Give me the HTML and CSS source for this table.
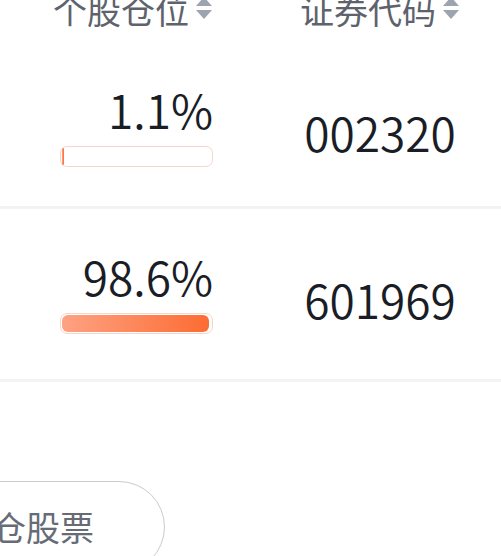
FILE: index.html
```html
<!DOCTYPE html>
<html lang="zh-CN">
<head>
<meta charset="utf-8">
<link rel="stylesheet" href="styles.css">
</head>
<body>
<div class="page">
  <div class="table">
    <div class="row head">
      <div class="cell c1"><span class="th">个股仓位<svg class="sort" viewBox="0 0 18 26" width="18" height="26"><polygon points="9,0 17,9 1,9"/><polygon points="1,13 17,13 9,22"/></svg></span></div>
      <div class="cell c2"><span class="th">证券代码<svg class="sort" viewBox="0 0 18 26" width="18" height="26"><polygon points="9,0 17,9 1,9"/><polygon points="1,13 17,13 9,22"/></svg></span></div>
    </div>
    <div class="row body">
      <div class="cell c1">
        <div class="pct">1.1%</div>
        <div class="track"><div class="fill" style="width:1.1%"></div></div>
      </div>
      <div class="cell c2"><div class="code">002320</div></div>
    </div>
    <div class="row body">
      <div class="cell c1">
        <div class="pct">98.6%</div>
        <div class="track"><div class="fill" style="width:98.6%"></div></div>
      </div>
      <div class="cell c2"><div class="code">601969</div></div>
    </div>
  </div>
  <div class="actions">
    <button class="btn">持仓股票</button>
  </div>
</div>
</body>
</html>
```

FILE: styles.css
```css
html, body {
  margin: 0;
  padding: 0;
  background: #ffffff;
}
body {
  width: 501px;
  height: 556px;
  overflow: hidden;
  font-family: "Noto Sans CJK SC", "Noto Sans", sans-serif;
}
.page {
  width: 501px;
}
.row {
  display: grid;
  grid-template-columns: 213px 180px;
  column-gap: 77px;
}
.head {
  margin-top: -7px;
  padding-bottom: 17px;
}
.th {
  display: inline-flex;
  align-items: center;
  font-size: 34px;
  line-height: 34px;
  color: #5e626d;
  white-space: nowrap;
}
.sort {
  margin-left: 6px;
  fill: #9ea3b0;
  flex: none;
}
.c1 {
  display: flex;
  flex-direction: column;
  align-items: flex-end;
}
.c2 {
  display: flex;
  justify-content: center;
  align-items: center;
}
.body {
  padding: 43px 0 39px;
  border-bottom: 3px solid #f3f3f3;
  align-items: center;
}
.body:last-child {
  padding: 45px 0 45px;
}
.pct {
  font-size: 46px;
  line-height: 45px;
  font-weight: 350;
  color: #1a1d26;
  white-space: nowrap;
}
.track {
  margin-top: 14px;
  width: 153px;
  height: 21px;
  box-sizing: border-box;
  border: 1.5px solid #f6d5ca;
  border-radius: 7px;
  padding: 1px;
  background: #ffffff;
}
.fill {
  height: 100%;
  border-radius: 6px;
  background: linear-gradient(90deg, #fea282 0%, #fc6c33 100%);
}
.code {
  font-size: 46px;
  line-height: 45px;
  font-weight: 350;
  color: #1a1d26;
  padding-top: 10px;
}
.actions {
  margin-top: 99px;
}
.btn {
  display: block;
  margin-left: -110px;
  height: 92px;
  padding: 0 70px 0 67px;
  border: 1.5px solid #c8cbd2;
  border-radius: 46px;
  background: #ffffff;
  font-family: "Noto Sans CJK SC", "Noto Sans", sans-serif;
  font-size: 34px;
  line-height: 88px;
  color: #676b76;
  white-space: nowrap;
}
```
